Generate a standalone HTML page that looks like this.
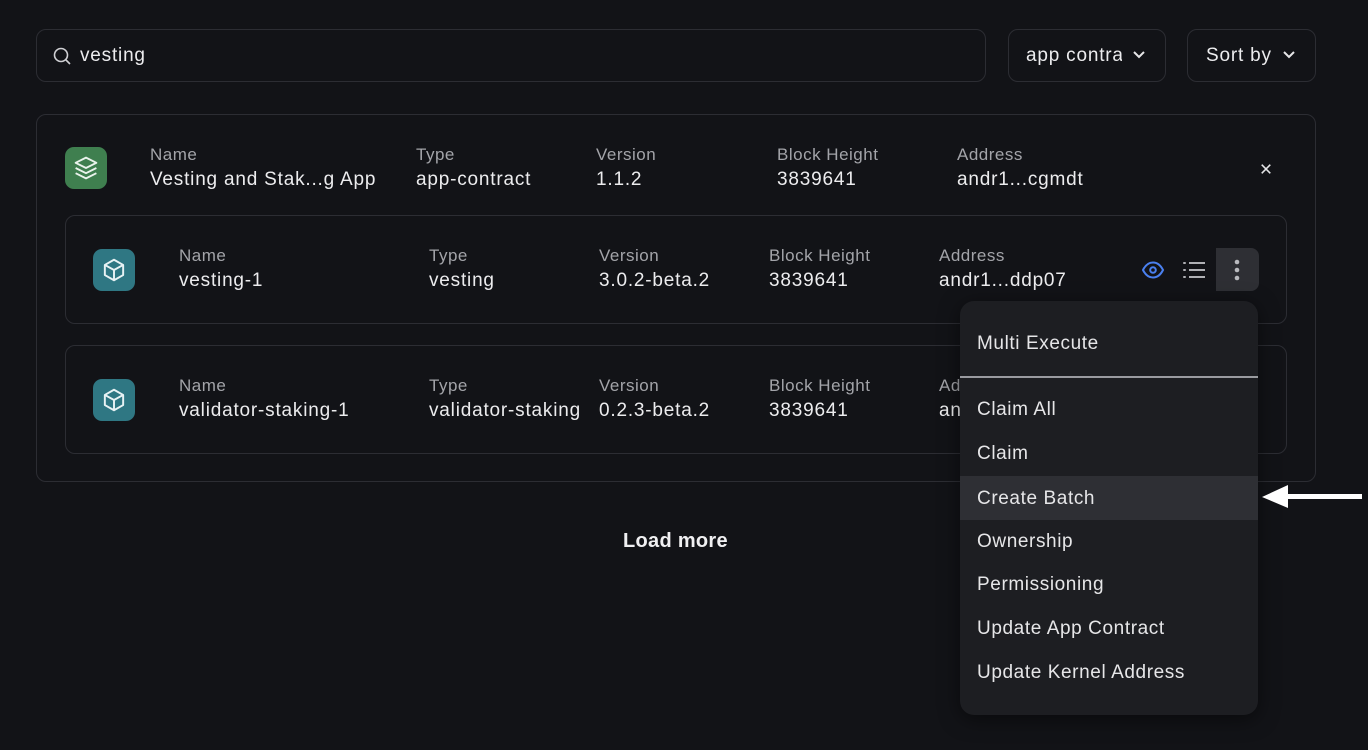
<html><head><style>
body{margin:0;width:1368px;height:750px;background:#121317;font-family:"Liberation Sans",sans-serif;color:#e8e8ea;position:relative;overflow:hidden}
.a{position:absolute}
.box{position:absolute;border:1px solid #2c2d33;border-radius:10px;box-sizing:border-box}
.lab{position:absolute;font-size:17px;color:#a3a4a9;white-space:nowrap;letter-spacing:0.5px;margin-top:-1px}
.val{position:absolute;font-size:19px;color:#ececee;white-space:nowrap;letter-spacing:0.8px;margin-top:0px}
.ic{position:absolute;width:42px;height:42px;border-radius:9px;display:flex;align-items:center;justify-content:center}
.mi{position:absolute;left:960px;width:298px;height:44px;line-height:46px;padding-left:17px;box-sizing:border-box;font-size:19px;color:#e6e6e8;letter-spacing:0.6px}
</style></head><body>
<div class="box" style="left:36px;top:29px;width:950px;height:53px"></div>
<svg class="a" style="left:52px;top:46px" width="20" height="20" viewBox="0 0 20 20" fill="none" stroke="#d0d0d4" stroke-width="1.6"><circle cx="9" cy="9" r="6.5"/><path d="M14 14l4 4"/></svg>
<div class="val" style="left:80px;top:45px">vesting</div>
<div class="box" style="left:1008px;top:29px;width:158px;height:53px"></div>
<div class="val" style="left:1026px;top:45px;width:96px;overflow:hidden">app contract</div>
<svg class="a" style="left:1132px;top:50px" width="14" height="10" viewBox="0 0 14 10" fill="none" stroke="#e6e6e8" stroke-width="2"><path d="M2 2l5 5 5-5"/></svg>
<div class="box" style="left:1187px;top:29px;width:129px;height:53px"></div>
<div class="val" style="left:1206px;top:45px">Sort by</div>
<svg class="a" style="left:1282px;top:50px" width="14" height="10" viewBox="0 0 14 10" fill="none" stroke="#e6e6e8" stroke-width="2"><path d="M2 2l5 5 5-5"/></svg>

<div class="box" style="left:36px;top:114px;width:1280px;height:368px"></div>
<div class="ic" style="left:65px;top:147px;background:#3f7f4f"><svg width="30" height="30" viewBox="0 0 26 26" fill="none" stroke="#eaf3ec" stroke-width="1.6" stroke-linejoin="round"><path d="M13 4l9 4.5-9 4.5-9-4.5z"/><path d="M4 13l9 4.5 9-4.5"/><path d="M4 17.5l9 4.5 9-4.5"/></svg></div>
<div class="lab" style="left:150px;top:146px">Name</div><div class="val" style="left:150px;top:169px">Vesting and Stak...g App</div>
<div class="lab" style="left:416px;top:146px">Type</div><div class="val" style="left:416px;top:169px">app-contract</div>
<div class="lab" style="left:596px;top:146px">Version</div><div class="val" style="left:596px;top:169px">1.1.2</div>
<div class="lab" style="left:777px;top:146px">Block Height</div><div class="val" style="left:777px;top:169px">3839641</div>
<div class="lab" style="left:957px;top:146px">Address</div><div class="val" style="left:957px;top:169px">andr1...cgmdt</div>
<svg class="a" style="left:1260px;top:163px" width="12" height="12" viewBox="0 0 14 14" stroke="#e6e6e8" stroke-width="1.8"><path d="M2 2l10 10M12 2L2 12"/></svg>

<div class="box" style="left:65px;top:215px;width:1222px;height:109px"></div>
<div class="ic" style="left:93px;top:249px;background:#2f7783"><svg width="28" height="28" viewBox="0 0 26 26" fill="none" stroke="#e8f2f4" stroke-width="1.8" stroke-linejoin="round"><path d="M13 3.5l8.5 4.8v9.4L13 22.5l-8.5-4.8V8.3z"/><path d="M4.5 8.3L13 13l8.5-4.7M13 13v9.5"/></svg></div>
<div class="lab" style="left:179px;top:247px">Name</div><div class="val" style="left:179px;top:270px">vesting-1</div>
<div class="lab" style="left:429px;top:247px">Type</div><div class="val" style="left:429px;top:270px">vesting</div>
<div class="lab" style="left:599px;top:247px">Version</div><div class="val" style="left:599px;top:270px">3.0.2-beta.2</div>
<div class="lab" style="left:769px;top:247px">Block Height</div><div class="val" style="left:769px;top:270px">3839641</div>
<div class="lab" style="left:939px;top:247px">Address</div><div class="val" style="left:939px;top:270px">andr1...ddp07</div>
<svg class="a" style="left:1141px;top:260px" width="24" height="20" viewBox="0 0 24 20" fill="none" stroke="#4a80f0" stroke-width="2"><path d="M2 10C5 4 9 2.5 12 2.5S19 4 22 10c-3 6-7 7.5-10 7.5S5 16 2 10z"/><circle cx="12" cy="10" r="2.8"/></svg>
<svg class="a" style="left:1182px;top:260px" width="26" height="20" viewBox="0 0 26 20" stroke="#b0b1b5" stroke-width="2"><path d="M7 3h16M7 10h16M7 17h16"/><path d="M2 3h1M2 10h1M2 17h1" stroke-linecap="round"/></svg>
<div class="a" style="left:1216px;top:248px;width:43px;height:43px;background:#2e2f34;border-radius:0 8px 8px 0"></div>
<svg class="a" style="left:1231px;top:257px" width="12" height="26" viewBox="0 0 12 26" fill="#b9babe"><circle cx="6" cy="5" r="2.3"/><circle cx="6" cy="13" r="2.3"/><circle cx="6" cy="21" r="2.3"/></svg>

<div class="box" style="left:65px;top:345px;width:1222px;height:109px"></div>
<div class="ic" style="left:93px;top:379px;background:#2f7783"><svg width="28" height="28" viewBox="0 0 26 26" fill="none" stroke="#e8f2f4" stroke-width="1.8" stroke-linejoin="round"><path d="M13 3.5l8.5 4.8v9.4L13 22.5l-8.5-4.8V8.3z"/><path d="M4.5 8.3L13 13l8.5-4.7M13 13v9.5"/></svg></div>
<div class="lab" style="left:179px;top:377px">Name</div><div class="val" style="left:179px;top:400px">validator-staking-1</div>
<div class="lab" style="left:429px;top:377px">Type</div><div class="val" style="left:429px;top:400px">validator-staking</div>
<div class="lab" style="left:599px;top:377px">Version</div><div class="val" style="left:599px;top:400px">0.2.3-beta.2</div>
<div class="lab" style="left:769px;top:377px">Block Height</div><div class="val" style="left:769px;top:400px">3839641</div>
<div class="lab" style="left:939px;top:377px">Address</div><div class="val" style="left:939px;top:400px">andr1...xxxxx</div>

<div class="a" style="left:623px;top:530px;font-size:20px;font-weight:bold;color:#f0f0f2;letter-spacing:0.3px">Load more</div>

<div class="a" style="left:960px;top:301px;width:298px;height:414px;background:#1d1e22;border-radius:14px;box-shadow:0 4px 20px rgba(0,0,0,.5)"></div>
<div class="mi" style="top:321px">Multi Execute</div>
<div class="a" style="left:960px;top:376px;width:298px;height:2px;background:#9a9ba0"></div>
<div class="mi" style="top:387px">Claim All</div>
<div class="mi" style="top:431px">Claim</div>
<div class="mi" style="top:476px;background:#2e2f34">Create Batch</div>
<div class="mi" style="top:519px">Ownership</div>
<div class="mi" style="top:562px">Permissioning</div>
<div class="mi" style="top:606px">Update App Contract</div>
<div class="mi" style="top:650px">Update Kernel Address</div>
<svg class="a" style="left:1262px;top:484px" width="100" height="26" viewBox="0 0 100 26" fill="#fff"><path d="M0 13L26 1v9h74v5H26v9z"/></svg>
</body></html>
